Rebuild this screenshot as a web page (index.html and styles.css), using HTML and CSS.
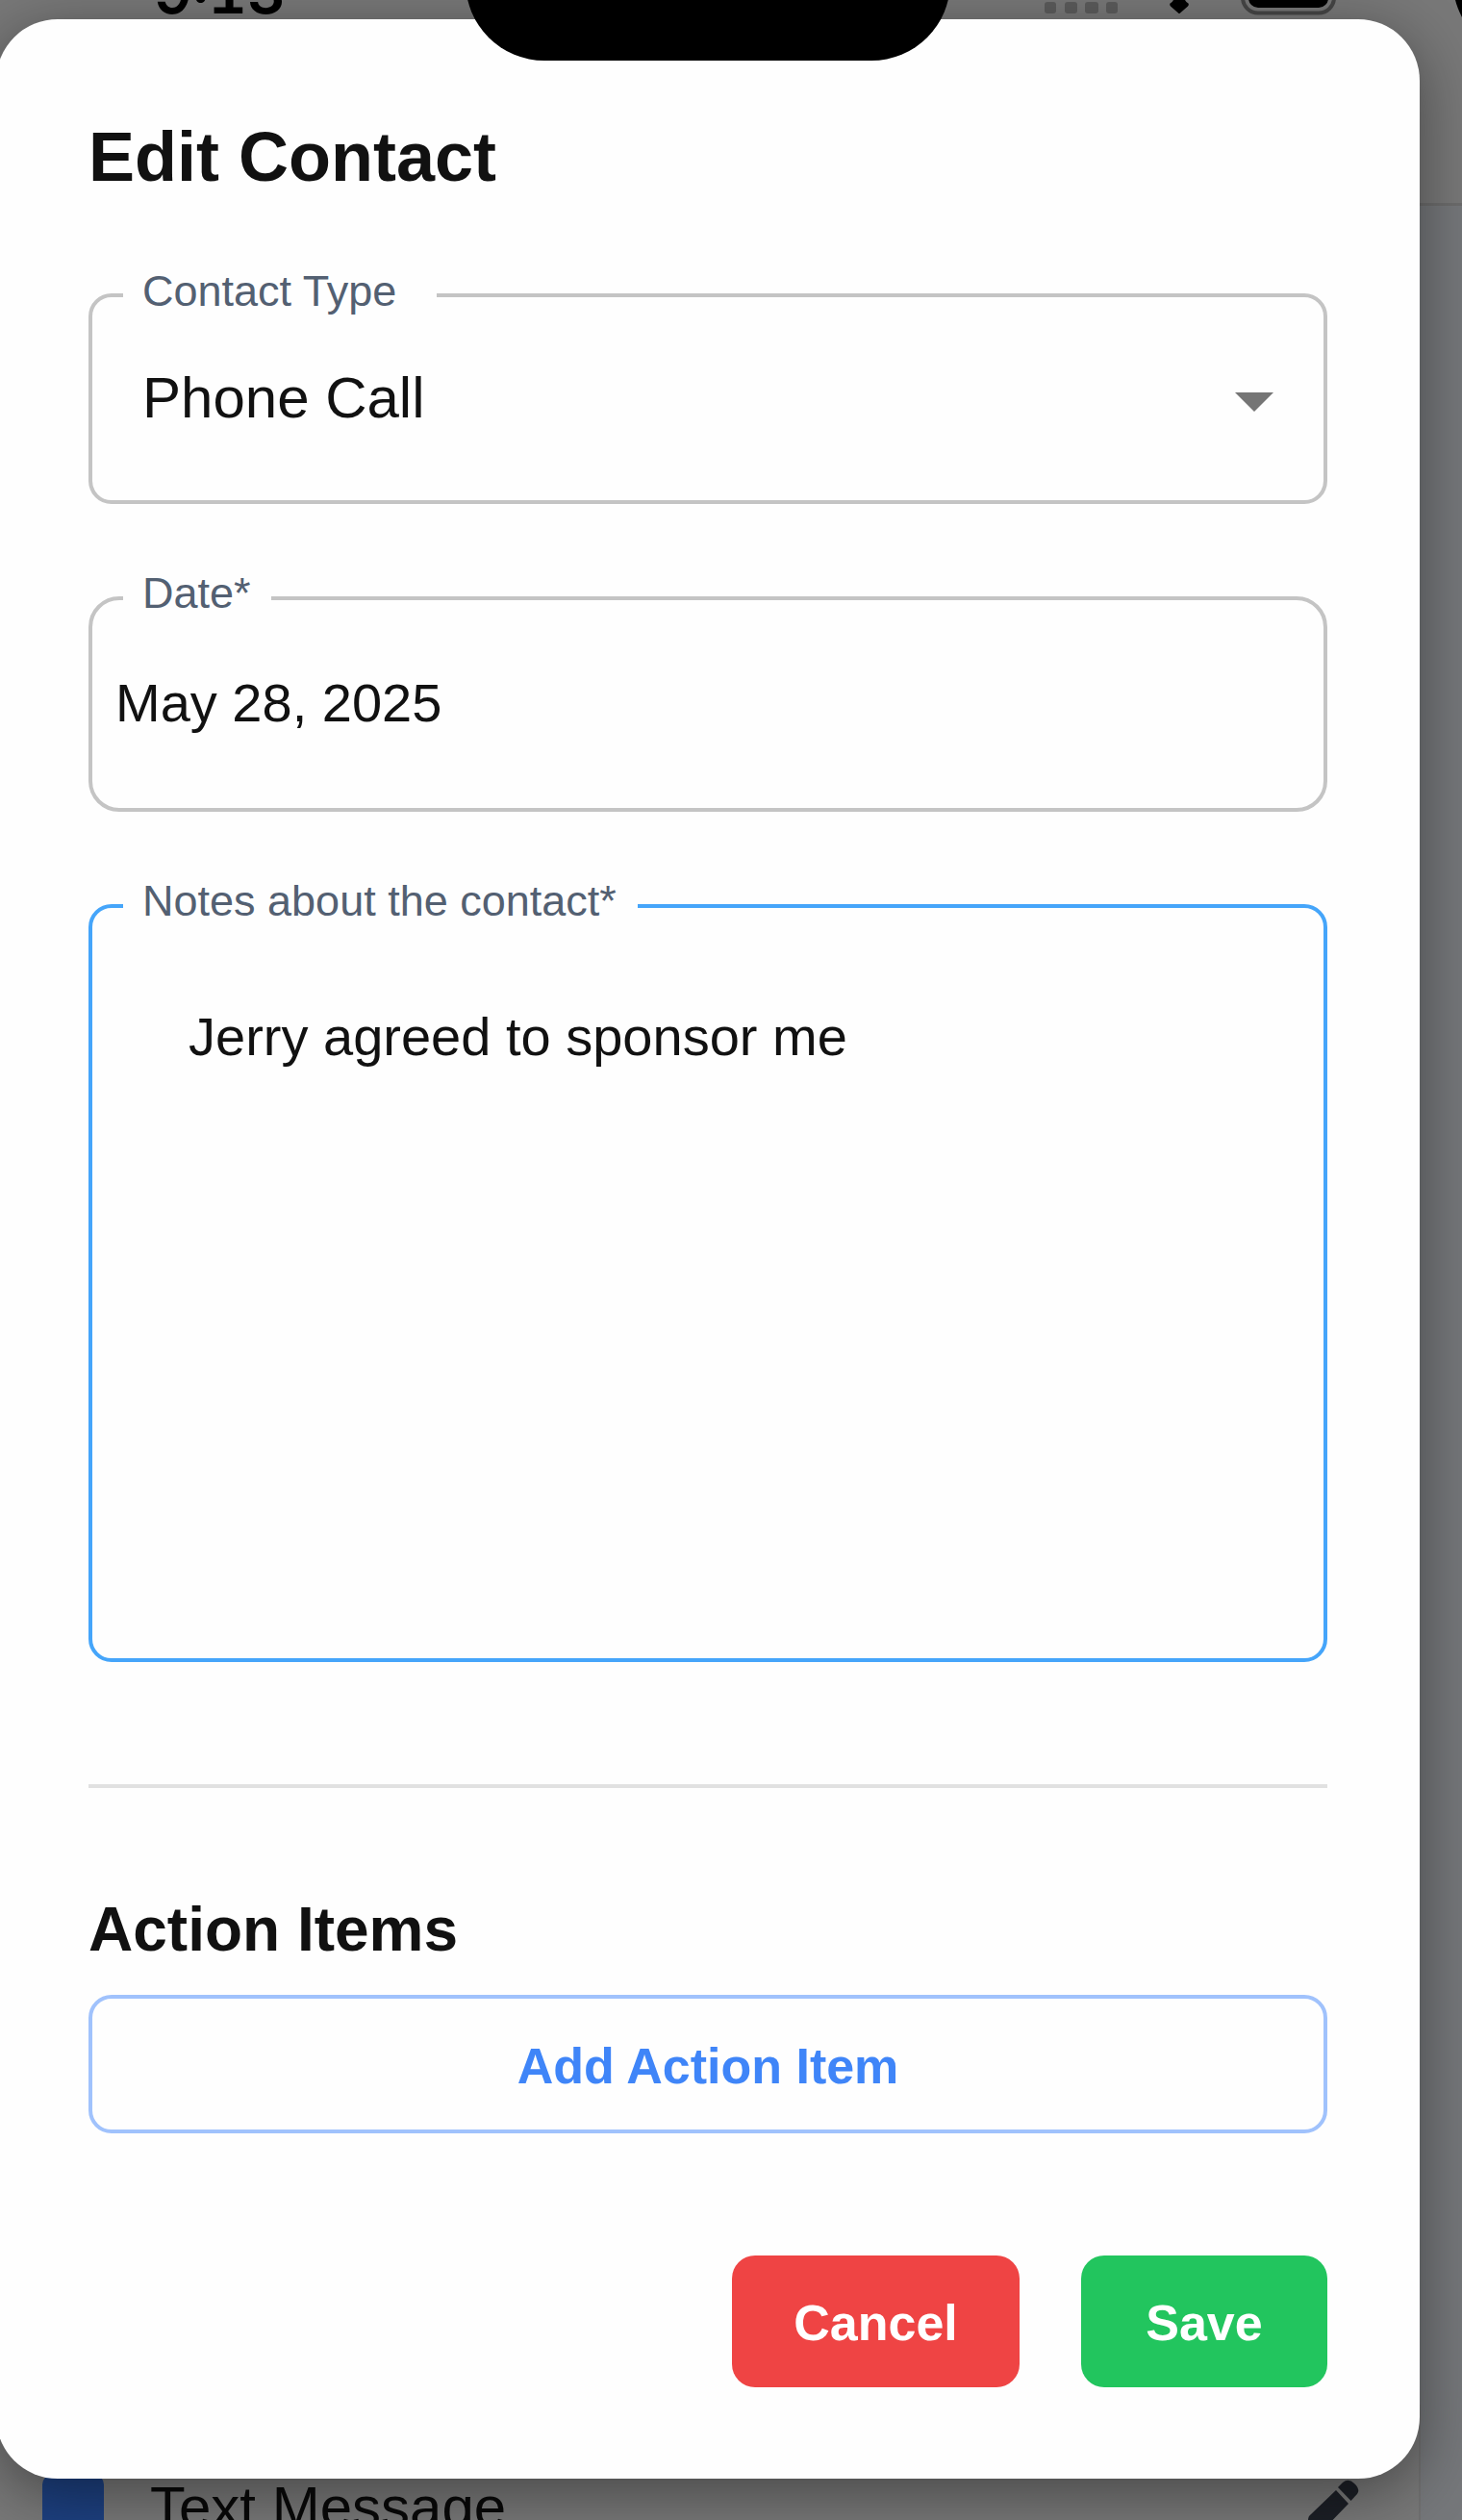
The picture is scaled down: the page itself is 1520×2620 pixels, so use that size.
FILE: index.html
```html
<!DOCTYPE html>
<html lang="en">
<head>
<meta charset="utf-8">
<title>Edit Contact</title>
<link rel="stylesheet" href="styles.css">
</head>
<body>
<div class="screen">
  <header class="status-bar">
    <span class="clock">9<i class="colon">:</i>13</span>
    <svg class="status-icons" width="440" height="20" viewBox="1080 0 440 20" aria-hidden="true">
      <g fill="#5c5c5c">
        <rect x="1086" y="2" width="12" height="12" rx="3"/>
        <rect x="1107" y="2" width="13" height="12" rx="3"/>
        <rect x="1128" y="2" width="14" height="12" rx="3"/>
        <rect x="1150" y="2" width="12" height="12" rx="3"/>
      </g>
      <path d="M1220 0H1232Q1233 2 1235.500 3.500Q1236.500 5 1235 6.500L1227 13.500Q1226 14.500 1225 13.500L1217 6.500Q1215.500 5 1216.500 3.500Q1219 2 1220 0Z"/>
      <rect x="1292" y="-24" width="95" height="37.500" rx="16" fill="none" stroke="#464646" stroke-width="4"/>
      <rect x="1298" y="-20" width="83" height="28" rx="10"/>
      <path d="M1513 0H1520V18Q1515 8 1513 0Z"/>
    </svg>
  </header>
  <main class="page">
    <div class="list-row">
      <span class="row-icon"></span>
      <span class="row-title">Text Message</span>
      <svg class="pencil" width="60" height="60" viewBox="0 0 60 60" aria-hidden="true">
        <path d="M33 13L46 27L18 56H4V44Q4 40 7 38Z"/>
        <path d="M35 10L40 5Q46 0 52 6L54 8Q58 13 55 17L48.500 24Z"/>
      </svg>
    </div>
  </main>
  <section class="modal">
    <h1 class="title">Edit Contact</h1>
    <div class="field select">
      <span class="label label-type">Contact Type</span>
      <span class="select-value">Phone Call</span>
      <svg class="caret" width="40" height="20" viewBox="0 0 40 20" aria-hidden="true"><path d="M0 0H40L20 20Z"/></svg>
    </div>
    <div class="field date">
      <span class="label label-date">Date*</span>
      <span>May 28, 2025</span>
    </div>
    <div class="field notes">
      <span class="label label-notes">Notes about the contact*</span>
      <span>Jerry agreed to sponsor me</span>
    </div>
    <hr class="divider">
    <h2 class="subtitle">Action Items</h2>
    <button class="btn add">Add Action Item</button>
    <div class="actions">
      <button class="btn cancel">Cancel</button>
      <button class="btn save">Save</button>
    </div>
  </section>
  <div class="notch"></div>
</div>
</body>
</html>
```
FILE: styles.css
```css
* { box-sizing: border-box; }

body {
  margin: 0;
  font-family: "Liberation Sans", Arial, Helvetica, sans-serif;
  color: #111;
}

.screen {
  position: relative;
  display: flex;
  flex-direction: column;
  width: 1520px;
  height: 2620px;
  overflow: hidden;
  background: #75777a;
}

.status-bar {
  display: flex;
  justify-content: space-between;
  align-items: flex-start;
  height: 214px;
  padding-left: 160px;
  background: #787878;
  border-bottom: 3px solid #6c6c6c;
}

.clock {
  margin-top: -46px;
  font: 600 62px/76px Inter, sans-serif;
  font-variant-numeric: tabular-nums;
  color: #000;
}

.colon {
  position: relative;
  top: -6px;
  font-style: normal;
}

.status-icons { flex: none; }

.page {
  flex: 1;
  display: flex;
  flex-direction: column;
  justify-content: flex-end;
}

.list-row {
  display: flex;
  align-items: flex-start;
  width: 1477px;
  height: 120px;
  padding: 73px 59px 0 44px;
  background: #787878;
  border-right: 2px solid #707070;
}

.row-icon {
  width: 64px;
  height: 47px;
  border-radius: 10px 10px 0 0;
  background: #1d4080;
}

.row-title {
  flex: 1;
  padding-left: 48px;
  font-size: 60px;
  line-height: 68px;
  color: #090909;
}

.pencil {
  margin-top: 3px;
  fill: #1c1f26;
}

.modal {
  position: absolute;
  top: 20px;
  left: -4px;
  width: 1480px;
  height: 2557px;
  display: flex;
  flex-direction: column;
  padding: 103px 96px 0;
  border-radius: 64px;
  background: #fefefe;
  box-shadow: 0 15px 64px rgba(0, 0, 0, 0.42);
}

.notch {
  position: absolute;
  top: -64px;
  left: 484px;
  width: 504px;
  height: 127px;
  border-radius: 0 0 82px 82px;
  background: #000;
}

.title {
  margin: 0 0 102px;
  font-size: 72px;
  line-height: 80px;
}

.field {
  position: relative;
  display: flex;
  align-items: flex-start;
  border: 4px solid #c4c4c4;
  border-radius: 24px;
  font-size: 56px;
  line-height: 64px;
}

.label {
  position: absolute;
  top: -32px;
  left: 32px;
  height: 50px;
  padding-left: 20px;
  background: #fefefe;
  color: #536072;
  font-size: 45px;
  line-height: 50px;
  white-space: nowrap;
}

.label-type { top: -31px; width: 326px; }
.label-date { width: 154px; }
.label-notes { width: 535px; }

.select {
  height: 219px;
  margin-bottom: 96px;
  padding: 71px 52px 0;
  justify-content: space-between;
  font-size: 60px;
  line-height: 68px;
}

.caret {
  margin-top: 28px;
  fill: #757575;
}

.date {
  height: 224px;
  margin-bottom: 96px;
  padding: 75px 24px 0;
  border-radius: 32px;
}

.notes {
  height: 788px;
  margin-bottom: 127px;
  padding: 102px 100px 0;
  border-color: #45a5fa;
}

.divider {
  width: 100%;
  height: 4px;
  margin: 0 0 111px;
  border: 0;
  background: #e1e1e1;
}

.subtitle {
  margin: 0 0 32px;
  font-size: 64px;
  line-height: 72px;
}

.btn {
  display: flex;
  justify-content: center;
  align-items: center;
  border: 0;
  border-radius: 24px;
  padding: 3px 0 0;
  color: #fff;
  font: bold 52px/60px "Liberation Sans", Arial, sans-serif;
}

.add {
  height: 144px;
  margin-bottom: 127px;
  border: 4px solid #a0c2fc;
  background: transparent;
  color: #3f85f8;
}

.actions {
  display: flex;
  justify-content: flex-end;
  gap: 64px;
}

.cancel { width: 299px; height: 137px; background: #ef4444; }
.save { width: 256px; height: 137px; background: #22c55e; }
```
